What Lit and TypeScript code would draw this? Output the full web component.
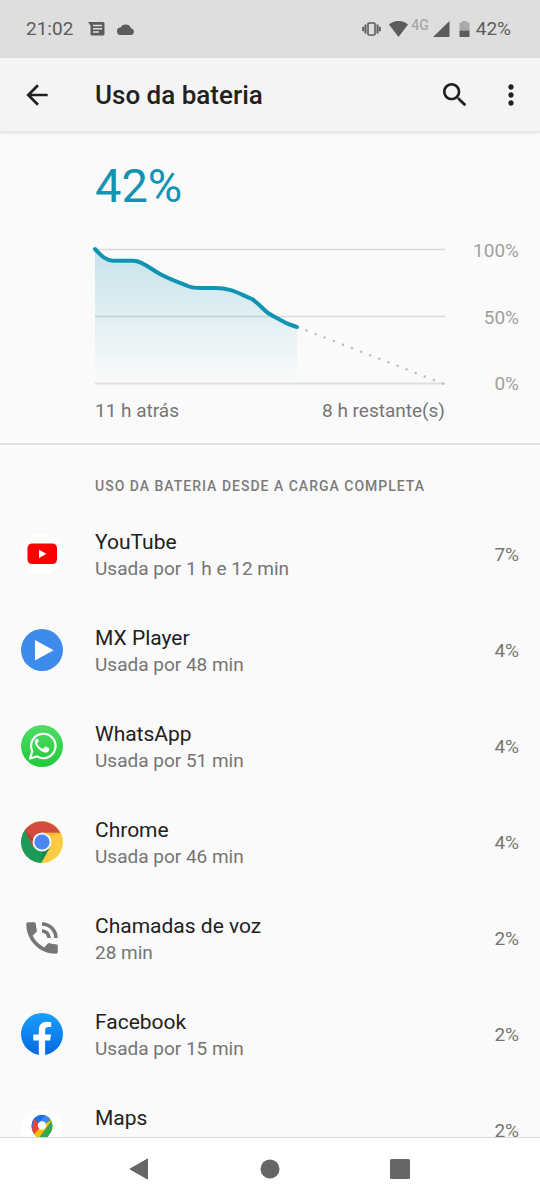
import { LitElement, html, svg, css } from "lit";
import { customElement, property } from "lit/decorators.js";

interface Usage {
  name: string;
  detail?: string;
  percent: number;
  icon: string;
}

const USAGE: Usage[] = [
  { name: "YouTube", detail: "Usada por 1 h e 12 min", percent: 7, icon: "youtube" },
  { name: "MX Player", detail: "Usada por 48 min", percent: 4, icon: "mx" },
  { name: "WhatsApp", detail: "Usada por 51 min", percent: 4, icon: "whatsapp" },
  { name: "Chrome", detail: "Usada por 46 min", percent: 4, icon: "chrome" },
  { name: "Chamadas de voz", detail: "28 min", percent: 2, icon: "call" },
  { name: "Facebook", detail: "Usada por 15 min", percent: 2, icon: "facebook" },
  { name: "Maps", percent: 2, icon: "maps" },
];

const ICONS: Record<string, unknown> = {
  youtube: svg`
    <circle cx="21" cy="21" r="21" fill="#fff"/>
    <rect x="6.500" y="10.500" width="29.500" height="20.500" rx="4.500" fill="#f00"/>
    <path d="M18 16.700v8.200l7.400-4.100z" fill="#fff"/>`,
  mx: svg`
    <circle cx="21" cy="21" r="21" fill="#3d8bec"/>
    <path d="M14 11v20.600l18.600-10.300z" fill="#fff"/>`,
  whatsapp: svg`
    <defs><linearGradient id="wa" x1="0" y1="0" x2="0" y2="1">
      <stop offset="0" stop-color="#4fdd65"/><stop offset="1" stop-color="#22c93a"/>
    </linearGradient></defs>
    <circle cx="21" cy="21" r="21" fill="url(#wa)"/>
    <path d="M9 33.500l2.300-7.300a12.200 12.200 0 1 1 4.700 5.200z" fill="none" stroke="#fff" stroke-width="2.200" stroke-linejoin="round"/>
    <path d="M17.300 14.300c-.5-.9-1.600-.7-2.300 0-1.700 1.900-1.500 4.200.6 7.200 2.500 3.600 5 5.300 8.100 6 2.200.4 4.500-1 4.700-3.100.1-.8 0-1-.6-1.300l-3-1.500c-.5-.2-.8-.1-1.100.3l-1.200 1.500c-.3.3-.6.4-1 .2-2.200-.9-4-2.500-5.200-4.700-.2-.4-.1-.6.2-1l.9-1.200c.2-.3.2-.6.1-.9z" fill="#fff"/>`,
  chrome: svg`
    <circle cx="21" cy="21" r="21" fill="#fbcb43"/>
    <path d="M21 21L4.500 8A21 21 0 0 0 20 42l9.300-16.200z" fill="#1b9a59"/>
    <path d="M3.800 9A21 21 0 0 1 39.200 11.700H21l-9.100 14z" fill="#d34a3e"/>
    <path d="M21 11.700h18.200l.8 1.500-11.500 1.700z" fill="#e2a52f" opacity=".5"/>
    <path d="M3.800 9l9 15.800-1-7.300z" fill="#a83329" opacity=".6"/>
    <path d="M20 42l9-15.500-7.500 4.500z" fill="#0c7a41" opacity=".5"/>
    <circle cx="21" cy="21" r="9.500" fill="#f4f6f6"/>
    <circle cx="21" cy="21" r="7.600" fill="#4b87ee"/>`,
  call: svg`
    <g transform="scale(1.750)" fill="#757575">
      <path d="M20 15.500c-1.250 0-2.450-.2-3.570-.57-.35-.11-.74-.03-1.020.24l-2.200 2.200c-2.830-1.440-5.150-3.750-6.590-6.590l2.200-2.210c.28-.26.36-.65.25-1C8.700 6.450 8.500 5.250 8.500 4c0-.55-.45-1-1-1H4c-.55 0-1 .45-1 1 0 9.390 7.610 17 17 17 .55 0 1-.45 1-1v-3.500c0-.55-.45-1-1-1zM19 12h2c0-4.970-4.030-9-9-9v2c3.870 0 7 3.130 7 7zm-4 0h2c0-2.760-2.240-5-5-5v2c1.660 0 3 1.340 3 3z"/>
    </g>`,
  facebook: svg`
    <defs><linearGradient id="fb" x1="0" y1="0" x2="0" y2="1">
      <stop offset="0" stop-color="#18a0fb"/><stop offset="1" stop-color="#0667e3"/>
    </linearGradient></defs>
    <circle cx="21" cy="21" r="21" fill="url(#fb)"/>
    <path d="M17.800 41.800V27.500h-5.500v-6h5.500v-4.300c0-5.400 3.200-8.400 8.100-8.400 1.600 0 3.200.2 4.300.4v4.900h-2.600c-2.700 0-3.500 1.600-3.500 3.400v4h6l-1 6h-5v14.300a21 21 0 0 1-6.300 0z" fill="#fff"/>`,
  maps: svg`
    <defs><clipPath id="pin"><path d="M21 36c-1 0-1.300-1.200-1.900-2.700-.9-2.300-2.500-4-4.300-6.300C12.300 24 10.500 20.500 10.500 16.500a10.500 10.500 0 0 1 21 0c0 4-1.800 7.500-4.300 10.500-1.800 2.300-3.400 4-4.300 6.300-.6 1.500-.9 2.700-1.900 2.700z"/></clipPath></defs>
    <circle cx="21" cy="21" r="21" fill="#fff"/>
    <g clip-path="url(#pin)">
      <rect x="10" y="5" width="22" height="32" fill="#34a853"/>
      <path d="M10 26L27.500 6H10z" fill="#1a73e8"/>
      <path d="M12.600 9.500L21 16.500 10 29z" fill="#ea4335"/>
      <path d="M21 16.500L9 30l6 6L32 10z" fill="#fbbc04"/>
      <path d="M21 16.500L32 3v4l-1.500 5L17 30l-2 6h18V6z" fill="#34a853"/>
      <path d="M24.500 5.500L18 13l5 3 8-7.500z" fill="#4285f4"/>
      <path d="M12.600 9.500L17.500 14 24.500 5.500 18 4z" fill="#1a73e8"/>
    </g>
    <circle cx="21" cy="16.500" r="4.200" fill="#fff"/>`,
};

@customElement("status-bar")
class StatusBar extends LitElement {
  static styles = css`
    :host {
      display: flex;
      align-items: center;
      justify-content: space-between;
      height: 58px;
      flex: none;
      padding: 0 29px 0 26px;
      box-sizing: border-box;
      background: #dedede;
      color: #5c5c5c;
      font-size: 19px;
      line-height: 24px;
    }
    .group { display: flex; align-items: center; }
    .notes { gap: 12px; }
    .time { margin-right: 3px; }
    .network { font-size: 14px; line-height: 16px; font-weight: 500; color: #a9a9a9; margin: 0 4px 8px 3px; }
    .vibrate { margin-right: 8px; }
    .battery { margin: 0 6px 0 9px; }
    svg { display: block; }
  `;

  render() {
    return html`
      <div class="group notes">
        <span class="time">21:02</span>
        <svg width="17" height="14" viewBox="0 0 17 14" aria-hidden="true">
          <path d="M0 0h15a1.500 1.500 0 0 1 1.500 1.500v10.500a1.500 1.500 0 0 1-1.500 1.500H4A1.500 1.500 0 0 1 2.500 12V3.500z" fill="#5c5c5c"/>
          <path d="M5 3.500h9M5 6.700h9M5 10h6" stroke="#dedede" stroke-width="1.400"/>
        </svg>
        <svg width="18" height="11" viewBox="0 0 18 11" aria-hidden="true">
          <path d="M4 11a3.700 3.700 0 0 1-.5-7.400A5.700 5.700 0 0 1 14 4.200 3.500 3.500 0 0 1 14.500 11z" fill="#5c5c5c"/>
        </svg>
      </div>
      <div class="group">
        <svg class="vibrate" width="19" height="14" viewBox="0 0 19 14" fill="none" stroke="#5c5c5c" aria-hidden="true">
          <rect x="6" y="1" width="7" height="12" rx="1" stroke-width="1.600"/>
          <path d="M3.500 2.500v9M15.500 2.500v9" stroke-width="2"/>
          <path d="M1.200 4.800v4.400M17.800 4.800v4.400" stroke-width="2"/>
        </svg>
        <svg width="19" height="16" viewBox="0 0 19 16" aria-hidden="true">
          <path d="M0 3.500C5.500-1.200 13.500-1.200 19 3.500L9.500 16z" fill="#5c5c5c"/>
        </svg>
        <span class="network">4G</span>
        <svg width="17" height="16" viewBox="0 0 17 16" aria-hidden="true"><path d="M16.500 0v16H0z" fill="#5c5c5c"/></svg>
        <svg class="battery" width="11" height="16" viewBox="0 0 11 16" aria-hidden="true">
          <path d="M3 0h5v1.500h2.500V9.500H.5V1.500H3z" fill="#a9a9a9"/>
          <path d="M.5 9.500h10V16H.5z" fill="#5c5c5c"/>
        </svg>
        <span>42%</span>
      </div>
    `;
  }
}

@customElement("battery-chart")
class BatteryChart extends LitElement {
  static styles = css`
    :host {
      display: grid;
      grid-template-columns: 1fr 74px;
      row-gap: 13px;
      padding: 0 21px 0 95px;
      font-size: 19px;
      line-height: 26px;
      color: #757575;
    }
    .plot { display: block; width: 100%; height: 136px; overflow: visible; }
    .plot * { vector-effect: non-scaling-stroke; }
    .scale {
      display: flex;
      flex-direction: column;
      justify-content: space-between;
      margin: -11px 0 -12px;
      text-align: right;
      color: #a0a0a0;
    }
    .range { display: flex; justify-content: space-between; }
  `;

  render() {
    return html`
      <svg class="plot" viewBox="0 0 350 136" preserveAspectRatio="none" role="img" aria-label="Nível da bateria">
        <defs>
          <linearGradient id="fill" x1="0" y1="0" x2="0" y2="1">
            <stop offset="0" stop-color="#1193b3" stop-opacity=".22"/>
            <stop offset="1" stop-color="#1193b3" stop-opacity="0"/>
          </linearGradient>
        </defs>
        <path d="M0 .5H350M0 67.500H350" stroke="#d9dbdd" stroke-width="1.500"/>
        <path d="M0 134.500H350" stroke="#dfe0e3" stroke-width="2"/>
        <path d="M0 0C5 5 10 11.700 18 11.700H38C47 11.700 54 19 65 25C76 31 86 34 94 37.500C98 39 100 39 106 39H120C138 39 144 45 157 50C164 55 168 60 173 64C179 68 184 70 190 73.500C195 76 198 76.500 202 78V134H0z" fill="url(#fill)"/>
        <path d="M0 0C5 5 10 11.700 18 11.700H38C47 11.700 54 19 65 25C76 31 86 34 94 37.500C98 39 100 39 106 39H120C138 39 144 45 157 50C164 55 168 60 173 64C179 68 184 70 190 73.500C195 76 198 76.500 202 78" fill="none" stroke="#1193b3" stroke-width="4" stroke-linecap="round" stroke-linejoin="round"/>
        <path d="M211.500 81.500L348 134.500" fill="none" stroke="#b9bdc0" stroke-width="2.500" stroke-linecap="round" stroke-dasharray="0 9.760"/>
      </svg>
      <div class="scale"><span>100%</span><span>50%</span><span>0%</span></div>
      <div class="range"><span>11 h atrás</span><span>8 h restante(s)</span></div>
    `;
  }
}

@customElement("usage-row")
class UsageRow extends LitElement {
  @property({ attribute: false }) usage!: Usage;

  static styles = css`
    :host { display: block; }
    .row {
      display: grid;
      grid-template-columns: 42px 1fr auto;
      column-gap: 32px;
      align-items: center;
      width: 100%;
      height: 96px;
      padding: 0 21px;
      border: 0;
      background: none;
      font: inherit;
      text-align: left;
    }
    .icon { display: block; width: 42px; height: 42px; }
    .text { padding-top: 2px; }
    .name { display: block; font-size: 21px; line-height: 28px; color: #212121; }
    .detail { display: block; min-height: 26px; font-size: 19px; line-height: 26px; color: #757575; }
    .percent { padding-top: 2px; font-size: 19px; line-height: 26px; color: #757575; }
  `;

  render() {
    const { name, detail, percent, icon } = this.usage;
    return html`
      <button class="row" type="button">
        <svg class="icon" viewBox="0 0 42 42" aria-hidden="true">${ICONS[icon]}</svg>
        <span class="text"><span class="name">${name}</span><span class="detail">${detail}</span></span>
        <span class="percent">${percent}%</span>
      </button>
    `;
  }
}

@customElement("app-root")
class AppRoot extends LitElement {
  static styles = css`
    :host {
      display: flex;
      flex-direction: column;
      height: 100vh;
      overflow: hidden;
      background: #fafafa;
      color: #212121;
      font-family: Roboto, "Noto Sans", sans-serif;
    }
    .toolbar {
      display: flex;
      align-items: center;
      flex: none;
      height: 73px;
      padding: 0 13px 0 21px;
      background: #f4f4f4;
      border-bottom: 1px solid #e6e6e6;
      box-shadow: 0 1px 3px rgba(0, 0, 0, 0.12);
      z-index: 1;
    }
    .tool { display: block; padding: 0; border: 0; background: none; color: #212121; }
    .tool svg { display: block; width: 32px; height: 32px; }
    .tool + .tool { margin-left: 24px; }
    h1 { flex: 1; margin: 0 0 0 42px; font-size: 26px; line-height: 32px; font-weight: 500; }
    main { flex: 1; min-height: 0; overflow: hidden; }
    .level { margin: 26px 95px 35px; font-size: 47px; line-height: 56px; color: #1193b3; }
    .summary { padding-bottom: 19px; border-bottom: 2px solid #e0e0e3; }
    h2 {
      margin: 31px 0 9px 95px;
      font-size: 14px;
      line-height: 21px;
      font-weight: 500;
      letter-spacing: 1px;
      text-transform: uppercase;
      color: #7a7a7a;
    }
    ul { margin: 0; padding: 0; list-style: none; }
    .nav {
      display: flex;
      align-items: center;
      justify-content: center;
      gap: 66px;
      flex: none;
      height: 62px;
      border-top: 1px solid #d8d8d8;
      background: #fff;
    }
    .key { display: grid; place-items: center; width: 64px; height: 48px; padding: 0; border: 0; background: none; }
  `;

  render() {
    return html`
      <status-bar></status-bar>
      <header class="toolbar">
        <button class="tool" type="button" aria-label="Voltar">
          <svg viewBox="0 0 24 24" fill="currentColor"><path d="M20 11H7.830l5.590-5.590L12 4l-8 8 8 8 1.410-1.410L7.830 13H20v-2z"/></svg>
        </button>
        <h1>Uso da bateria</h1>
        <button class="tool" type="button" aria-label="Pesquisar">
          <svg viewBox="0 0 24 24" fill="currentColor"><path d="M15.500 14h-.79l-.28-.27C15.410 12.590 16 11.110 16 9.500 16 5.910 13.090 3 9.500 3S3 5.910 3 9.500 5.910 16 9.500 16c1.610 0 3.090-.59 4.230-1.570l.27.28v.79l5 4.990L20.490 19l-4.990-5zm-6 0C7.010 14 5 11.990 5 9.500S7.010 5 9.500 5 14 7.010 14 9.500 11.990 14 9.500 14z"/></svg>
        </button>
        <button class="tool" type="button" aria-label="Mais opções">
          <svg viewBox="0 0 24 24" fill="currentColor"><path d="M12 8c1.100 0 2-.9 2-2s-.9-2-2-2-2 .9-2 2 .9 2 2 2zm0 2c-1.100 0-2 .9-2 2s.9 2 2 2 2-.9 2-2-.9-2-2-2zm0 6c-1.100 0-2 .9-2 2s.9 2 2 2 2-.9 2-2-.9-2-2-2z"/></svg>
        </button>
      </header>
      <main>
        <section class="summary">
          <p class="level">42%</p>
          <battery-chart></battery-chart>
        </section>
        <h2>Uso da bateria desde a carga completa</h2>
        <ul>
          ${USAGE.map((usage) => html`<li><usage-row .usage=${usage}></usage-row></li>`)}
        </ul>
      </main>
      <nav class="nav">
        <button class="key" type="button" aria-label="Voltar">
          <svg width="22" height="22" viewBox="0 0 22 22"><path d="M18.500 1v20L1 11z" fill="#666" stroke="#666" stroke-linejoin="round"/></svg>
        </button>
        <button class="key" type="button" aria-label="Início">
          <svg width="20" height="20" viewBox="0 0 20 20"><circle cx="10" cy="10" r="9.500" fill="#666"/></svg>
        </button>
        <button class="key" type="button" aria-label="Recentes">
          <svg width="20" height="20" viewBox="0 0 20 20"><rect width="20" height="20" rx="1.500" fill="#666"/></svg>
        </button>
      </nav>
    `;
  }
}
